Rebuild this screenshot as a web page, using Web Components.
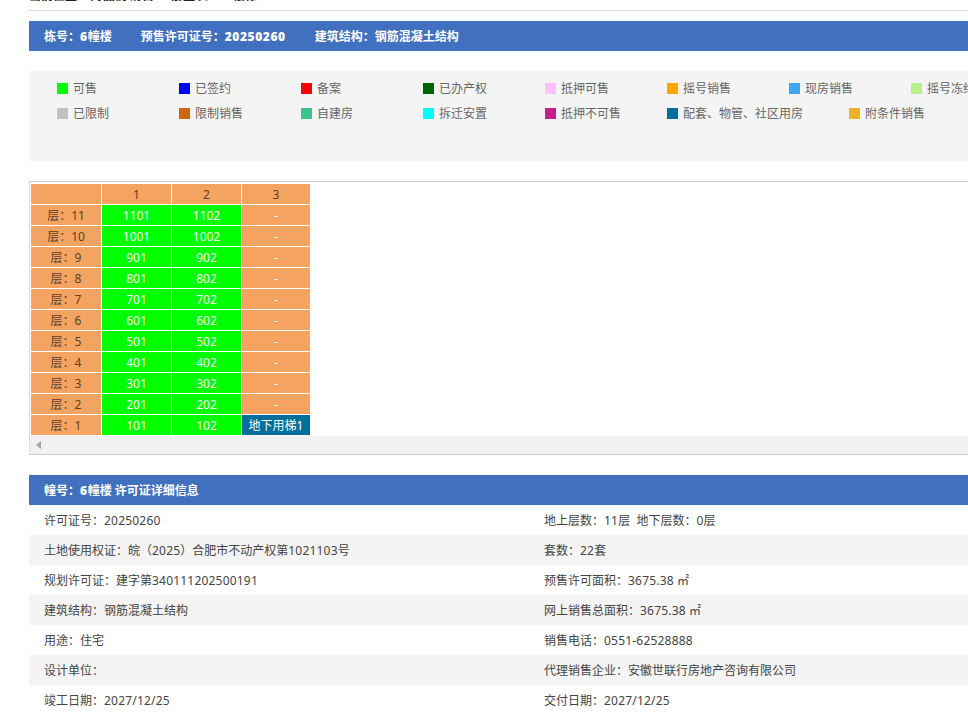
<!DOCTYPE html>
<html lang="zh-CN"><head><meta charset="utf-8"><title>楼盘表</title>
<style>
html,body{margin:0;padding:0;background:#fff;overflow:hidden;height:726px}
body{font:12px/20px "Noto Sans","Noto Sans CJK SC",sans-serif;color:#444;text-spacing-trim:space-all}
main{display:block;width:1010px;margin-left:29px}
bc-bar b{letter-spacing:.6px}
bc-row em{font-style:normal;letter-spacing:.2px}
bc-crumb span{margin-left:4px}
bc-crumb span:first-child{margin-left:0}
bc-crumb .w{letter-spacing:1px;margin-left:1px}
bc-crumb .t{letter-spacing:1px}
bc-crumb .l{margin-left:24px}
</style></head><body>
<main>
<bc-crumb><span>当前位置：</span><span class="w">商品房销售</span><span>&gt;</span><span class="t">楼盘表</span><span class="l">楼栋</span></bc-crumb>
<bc-bar top="10"><span>栋号：<b>6</b>幢楼</span><span>预售许可证号：<b>20250260</b></span><span>建筑结构：钢筋混凝土结构</span></bc-bar>
<bc-legend>
<bc-key c="#00ff00">可售</bc-key><bc-key c="#0000ff">已签约</bc-key><bc-key c="#ff0000">备案</bc-key><bc-key c="#006400">已办产权</bc-key><bc-key c="#ffc0ff">抵押可售</bc-key><bc-key c="#ffa500">摇号销售</bc-key><bc-key c="#3fa5f5">现房销售</bc-key><bc-key c="#b9f08c">摇号冻结</bc-key>
<bc-key c="#c0c0c0">已限制</bc-key><bc-key c="#cc6611">限制销售</bc-key><bc-key c="#36c48f">自建房</bc-key><bc-key c="#00ffff">拆迁安置</bc-key><bc-key c="#c71e8e">抵押不可售</bc-key><bc-key c="#006f9c">配套、物管、社区用房</bc-key><bc-key c="#efb128">附条件销售</bc-key>
</bc-legend>
<bc-floors></bc-floors>
<bc-bar top="20"><span>幢号：<b>6</b>幢楼 许可证详细信息</span></bc-bar>
<bc-info>
<bc-row><span>许可证号：20250260</span><span>地上层数：11层&nbsp;&nbsp;地下层数：0层</span></bc-row>
<bc-row><span>土地使用权证：皖（2025）合肥市不动产权第1021103号</span><span>套数：22套</span></bc-row>
<bc-row><span>规划许可证：建字第340111202500191</span><span>预售许可面积：3675.38 ㎡</span></bc-row>
<bc-row><span>建筑结构：钢筋混凝土结构</span><span>网上销售总面积：3675.38 ㎡</span></bc-row>
<bc-row><span>用途：住宅</span><span>销售电话：0551-62528888</span></bc-row>
<bc-row><span>设计单位：</span><span>代理销售企业：安徽世联行房地产咨询有限公司</span></bc-row>
<bc-row><span>竣工日期：2027/12/25</span><span>交付日期：2027/12/25</span></bc-row>
</bc-info>
</main>
<script>
function make(name,html,init){
  customElements.define(name,class extends HTMLElement{
    constructor(){super();this.attachShadow({mode:'open'}).innerHTML=html;}
    connectedCallback(){if(init)init(this);}
  });
}
make('bc-crumb',`<style>
:host{display:block;height:10px;border-bottom:1px solid #ddd;overflow:hidden}
div{display:flex;margin-top:-14px;line-height:20px;font-weight:700;color:#222;white-space:nowrap}
</style><div><slot></slot></div>`);
make('bc-bar',`<style>
:host{display:flex;box-sizing:border-box;height:30px;align-items:center;gap:29px;padding:2px 0 0 15px;background:#4270c0;color:#fff;font-weight:700;white-space:nowrap}
</style><slot></slot>`,el=>{el.style.marginTop=el.getAttribute('top')+'px';});
make('bc-legend',`<style>
:host{display:flex;flex-wrap:wrap;align-content:flex-start;margin-top:20px;height:80px;padding:5px 0 5px 28px;background:#f4f4f4}
</style><slot></slot>`);
make('bc-key',`<style>
:host{display:flex;align-items:center;height:25px;min-width:76px;margin-right:46px;color:#666;white-space:nowrap}
i{width:11px;height:11px;margin:-1px 5px 0 0;flex:none}
</style><i></i><slot></slot>`,el=>{el.shadowRoot.querySelector('i').style.background=el.getAttribute('c');});
make('bc-floors',`<style>
:host{display:block;margin-top:20px;border-top:1px solid #ccc;border-left:1px solid #ddd;border-bottom:1px solid #ccc}
table{border-collapse:separate;border-spacing:1px;margin:1px 0 0 0;table-layout:fixed;width:281px;font-size:12px}
td{width:69px;height:20px;padding:1px 0 0;box-sizing:border-box;line-height:19px;text-align:center;background:#f4a460;color:#5f4028;white-space:nowrap}
td:first-child{width:70px}
td:last-child{width:68px}
td.s{background:#00ff00;color:#fff}
td.d{color:#fff}
td.u{background:#006f9c;color:#fff}
.sb{height:18px;background:#f1f1f1;display:flex;align-items:center;padding-left:6px}
.sb i{width:0;height:0;border-style:solid;border-width:4px 5px 4px 0;border-color:transparent #a3a3a3 transparent transparent}
</style><table><tbody></tbody></table><div class="sb"><i></i></div>`,el=>{
  const b=el.shadowRoot.querySelector('tbody');
  let h='<tr><td></td><td>1</td><td>2</td><td>3</td></tr>';
  for(let f=11;f>=1;f--){
    const p=f*100;
    h+=`<tr><td>层：${f}</td><td class="s">${p+1}</td><td class="s">${p+2}</td>`+
       (f===1?'<td class="u">地下用梯1</td>':'<td class="d">-</td>')+'</tr>';
  }
  b.innerHTML=h;
});
make('bc-info',`<style>:host{display:block}</style><slot></slot>`);
make('bc-row',`<style>
:host{display:grid;box-sizing:border-box;grid-template-columns:500px 1fr;height:30px;align-items:center;padding:1px 0 0 15px;color:#444;white-space:nowrap}
:host(:nth-child(even)){background:#f4f4f4}
</style><slot></slot>`,el=>{
  el.querySelectorAll('span').forEach(s=>{s.innerHTML=s.innerHTML.replace(/[\d\/.\-]+/g,'<em>$&</em>');});
});
</script>
</body></html>
